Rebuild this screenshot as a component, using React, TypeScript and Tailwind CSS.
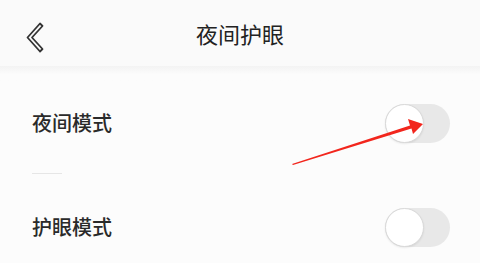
import React from 'react';

function Toggle() {
  return (
    <div className="h-[39px] w-[65px] rounded-full bg-[#e8e8e8] flex items-center">
      <div className="h-[39px] w-[39px] rounded-full bg-white border border-[#d9d9d9] shadow-[0_1px_2px_rgba(0,0,0,0.08)]" />
    </div>
  );
}

export default function App() {
  return (
    <div
      className="relative w-[500px] h-[263px] overflow-hidden bg-white"
      style={{ fontFamily: '"Noto Sans CJK SC", "Noto Sans", sans-serif' }}
    >
      <div className="w-[480px] h-full bg-[#fcfcfc] flex flex-col">
        {/* header */}
        <header className="h-[66px] bg-[#fafafa] flex items-center relative shrink-0">
          <svg className="absolute left-[25px] top-[22px]" width="20" height="31" viewBox="0 0 20 31">
            <path
              d="M15 1.5 L17.5 4 L7 15.5 L17.5 27 L15 29.5 L2.5 15.5 Z"
              fill="none"
              stroke="#333"
              strokeWidth="1.8"
              strokeLinejoin="round"
            />
          </svg>
          <h1 className="w-full text-center text-[22px] text-[#222] font-normal leading-none">夜间护眼</h1>
        </header>
        <div className="h-[17px] bg-gradient-to-b from-[#f3f3f3] to-[#fcfcfc] to-50% shrink-0" />

        {/* rows */}
        <div className="flex items-center justify-between pl-[32px] pr-[30px] h-[80px] shrink-0">
          <span className="text-[20px] text-[#2a2a2a] font-medium leading-none">夜间模式</span>
          <Toggle />
        </div>
        <div className="ml-[32px] w-[30px] h-px bg-[#e6e6e6] mt-[10px] shrink-0" />
        <div className="flex items-center justify-between pl-[32px] pr-[30px] h-[80px] mt-[13px] shrink-0">
          <span className="text-[20px] text-[#2a2a2a] font-medium leading-none">护眼模式</span>
          <Toggle />
        </div>
      </div>

      {/* annotation arrow */}
      <svg className="absolute left-0 top-0 pointer-events-none" width="500" height="263" viewBox="0 0 500 263">
        <path d="M292 164 L410 125.5 L408 119 L423 124 L413 134 L411.5 128.5 L293 165 Z" fill="#f2261d" />
      </svg>
    </div>
  );
}
